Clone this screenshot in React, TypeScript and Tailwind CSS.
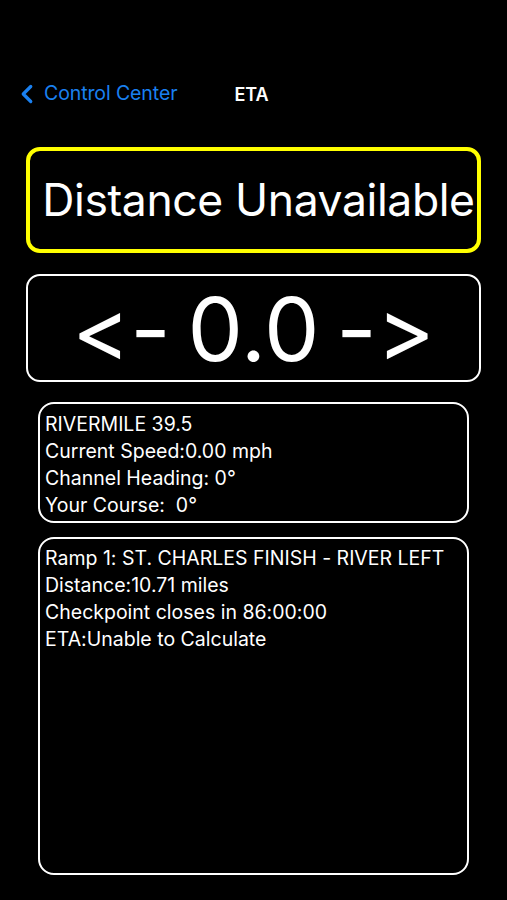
import { ChevronLeft } from 'lucide-react';

const font = { fontFamily: 'Inter, "Noto Sans", sans-serif' };

export default function App() {
  const info = ['RIVERMILE 39.5', 'Current Speed:0.00 mph', 'Channel Heading: 0°', 'Your Course:  0°'];
  const ramp = [
    'Ramp 1: ST. CHARLES FINISH - RIVER LEFT',
    'Distance:10.71 miles',
    'Checkpoint closes in 86:00:00',
    'ETA:Unable to Calculate',
  ];

  return (
    <div
      className="w-[507px] h-[900px] bg-black text-white flex flex-col pt-[74px] [font-feature-settings:'calt'_0,'liga'_0]"
      style={font}
    >
      <div className="h-[40px] flex items-center">
        <div className="flex items-center text-[#1a80f0] pl-[12px]">
          <ChevronLeft size={30} strokeWidth={2.6} />
          <span className="text-[19.5px] ml-[2px] tracking-[-0.1px]">Control Center</span>
        </div>
        <span className="ml-[57px] text-[18px] font-semibold">ETA</span>
      </div>

      <div className="mt-[33px] mx-[26px] h-[106px] border-4 border-[#ffff00] rounded-[14px] flex items-center justify-center">
        <span className="text-[44.5px] tracking-[-0.4px] whitespace-nowrap pl-[10px]">Distance Unavailable</span>
      </div>

      <div className="mt-[21px] mx-[26px] h-[108px] border-2 border-white rounded-[14px] flex items-center justify-center">
        <span className="text-[88px] leading-none whitespace-nowrap pt-[2px] [word-spacing:-8px]">&lt;- 0.0 -&gt;</span>
      </div>

      <div className="mt-[20px] mx-[38px] h-[121px] border-2 border-white rounded-[16px] px-[5px] pt-[7px]">
        {info.map((l) => (
          <div key={l} className="text-[19.5px] leading-[27px] whitespace-pre">{l}</div>
        ))}
      </div>

      <div className="mt-[14px] mx-[38px] h-[338px] border-2 border-white rounded-[16px] px-[5px] pt-[6px]">
        {ramp.map((l) => (
          <div key={l} className="text-[19.5px] leading-[27px] whitespace-pre">{l}</div>
        ))}
      </div>
    </div>
  );
}
